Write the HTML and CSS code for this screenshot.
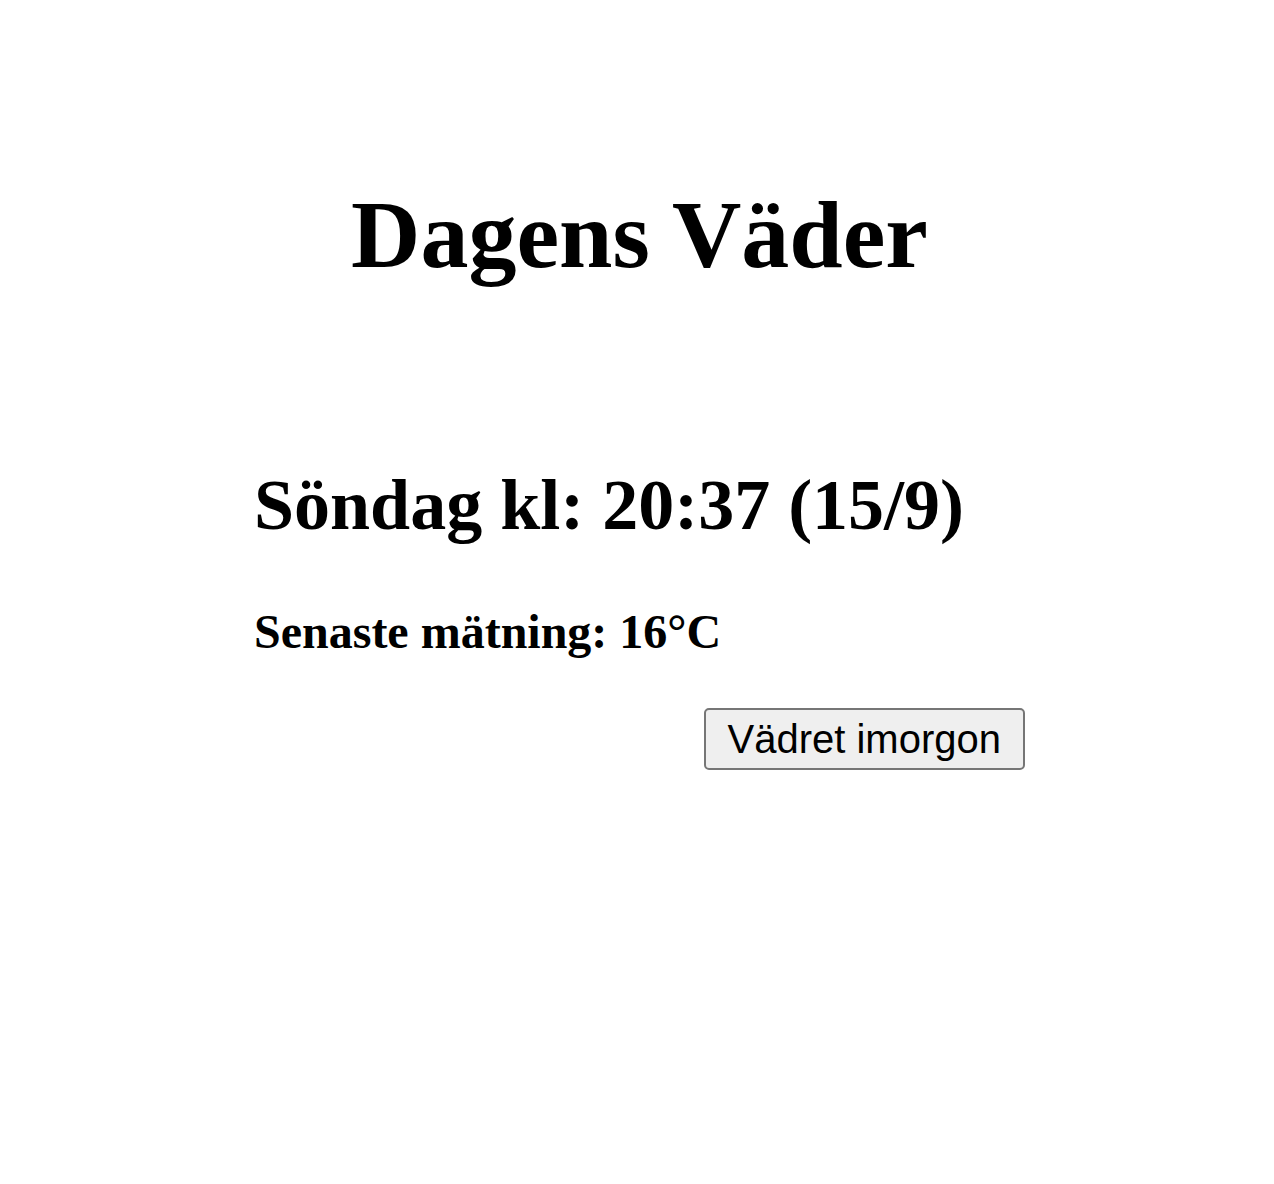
FILE: index.html
```html
<!DOCTYPE html>
<html lang="sv">
<head>
<meta charset="utf-8">
<title>Dagens Väder</title>
<link rel="stylesheet" href="styles.css">
</head>
<body>
<h1 class="title">Dagens Väder</h1>
<main class="card">
  <h2 class="day">Söndag kl: 20:37 (15/9)</h2>
  <h3 class="temp">Senaste mätning: 16°C</h3>
  <div class="actions">
    <button class="btn" type="button">Vädret imorgon</button>
  </div>
</main>
</body>
</html>
```

FILE: styles.css
```css
html, body {
  margin: 0;
  padding: 0;
  background: #ffffff;
  color: #000000;
  font-family: "Liberation Serif", "Times New Roman", serif;
}

body {
  padding-left: 5px;
}

.title {
  margin: 179px 0 0;
  font-size: 96px;
  font-weight: bold;
  text-align: center;
  line-height: normal;
}

.card {
  width: 771px;
  margin: 174px auto 0;
}

.day {
  margin: 0;
  font-size: 72px;
  font-weight: bold;
  line-height: normal;
}

.temp {
  margin: 57px 0 0;
  font-size: 48px;
  font-weight: bold;
  line-height: normal;
}

.actions {
  display: flex;
  justify-content: flex-end;
  margin-top: 49px;
}

.btn {
  font-family: "Liberation Sans", Arial, sans-serif;
  font-size: 40px;
  line-height: normal;
  color: #000000;
  background: #efefef;
  border: 2px solid #767676;
  border-radius: 5px;
  padding: 7px 22px 6px;
  margin: 0;
}
```
